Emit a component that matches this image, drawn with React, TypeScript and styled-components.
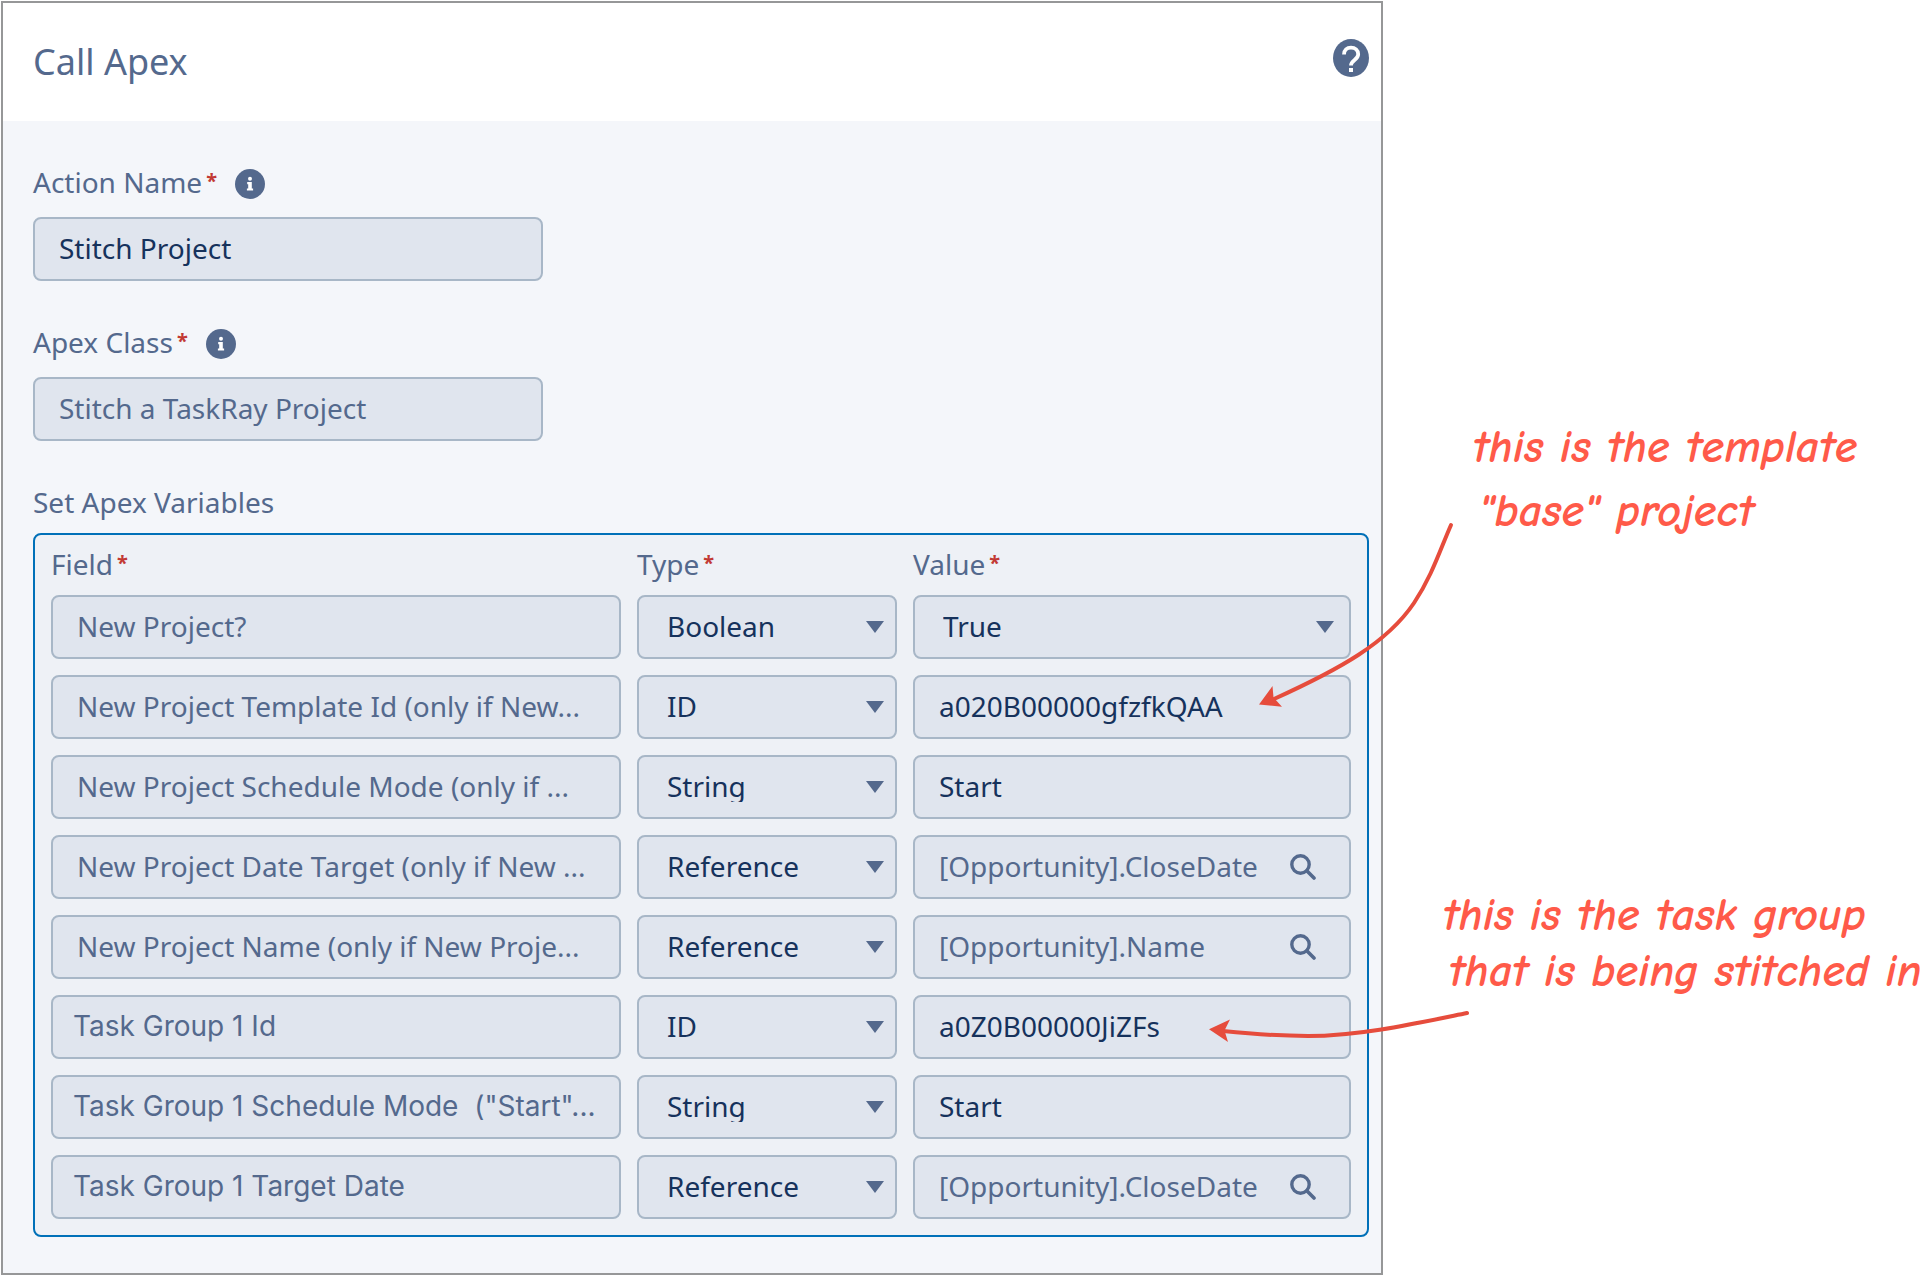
import React, { useId } from "react";
import styled, { createGlobalStyle } from "styled-components";

const color = {
  text: "#54698d",
  strong: "#16325c",
  border: "#a8b7c7",
  field: "#e0e5ee",
  body: "#f4f6fa",
  table: "#eef1f6",
  focus: "#0070b8",
  frame: "#969798",
  required: "#c23934",
  note: "#ff5a49",
  arrow: "#e64c3c",
};

const sans = `"Noto Sans", "Open Sans", sans-serif`;

const GlobalStyle = createGlobalStyle`
  *, *::before, *::after { box-sizing: border-box; }
  body {
    margin: 0;
    background: #fff;
    color: ${color.text};
    font: 28px/28px ${sans};
  }
  input, select, button { font: inherit; }
`;

const Page = styled.main`
  display: flex;
  align-items: flex-start;
  padding: 1px 0 0 1px;
  overflow: hidden;
`;

const Panel = styled.section`
  flex: 1;
  min-width: 0;
  border: 2px solid ${color.frame};
  background: ${color.body};
`;

const Header = styled.header`
  display: flex;
  justify-content: space-between;
  align-items: flex-start;
  height: 118px;
  padding: 36px 12px 0 30px;
  background: #fff;
`;

const Title = styled.h1`
  margin: 0;
  font-size: 36px;
  line-height: 46px;
  font-weight: 400;
`;

const IconButton = styled.button`
  display: flex;
  flex: none;
  padding: 0;
  border: 0;
  background: none;
  color: ${color.text};
  cursor: pointer;
`;

const Body = styled.div`
  padding: 48px 12px 36px 30px;
`;

const Field = styled.div`
  width: 510px;
  margin-bottom: 48px;
`;

const LabelRow = styled.div`
  display: flex;
  align-items: flex-start;
  gap: 18px;
  height: 32px;
  margin-bottom: 16px;
`;

const Label = styled.label`
  display: flex;
  gap: 4px;
  min-height: 28px;
  line-height: 26px;
`;

const Required = styled.abbr`
  color: ${color.required};
  font-size: 20px;
  font-weight: 700;
  line-height: 24px;
  text-decoration: none;
`;

const Box = styled.div`
  display: flex;
  align-items: center;
  height: 64px;
  border: 2px solid ${color.border};
  border-radius: 8px;
  background: ${color.field};
`;

const TextInput = styled.input<{ $muted?: boolean; $plain?: boolean }>`
  flex: 1;
  min-width: 0;
  height: 100%;
  padding: 0 24px 2px;
  border: 0;
  outline: 0;
  background: none;
  color: ${(p) => (p.$muted ? color.text : color.strong)};
  ${(p) => p.$plain && `font-family: Inter, sans-serif; padding: 0 20px 2px;`}
`;

const SearchButton = styled(IconButton)`
  margin-right: 33px;
`;

const SelectBox = styled.div<{ $inset: number }>`
  display: grid;
  align-items: center;

  & > * {
    grid-area: 1 / 1;
  }

  svg {
    justify-self: end;
    margin-right: ${(p) => p.$inset}px;
    pointer-events: none;
  }
`;

const Select = styled.select`
  appearance: none;
  width: 100%;
  height: 64px;
  padding: 11px 40px 13px 28px;
  border: 2px solid ${color.border};
  border-radius: 8px;
  background: ${color.field};
  color: ${color.strong};
  line-height: 32px;
`;

const GroupTitle = styled.h2`
  margin: 0 0 18px;
  font-size: 28px;
  line-height: 26px;
  font-weight: 400;
`;

const Variables = styled.div`
  display: grid;
  gap: 16px;
  padding: 16px;
  border: 2px solid ${color.focus};
  border-radius: 8px;
  background: ${color.table};
`;

const Row = styled.div`
  display: grid;
  grid-template-columns: minmax(0, 570fr) minmax(0, 260fr) minmax(0, 438fr);
  gap: 16px;
`;

const Notes = styled.aside`
  position: relative;
  display: flex;
  flex-direction: column;
  gap: 344px;
  flex: none;
  width: 544px;
  padding: 415px 0 0 60px;
  color: ${color.note};
`;

const Note = styled.p<{ $line: number; $indent: number }>`
  margin: 0 0 0 ${(p) => p.$indent}px;
  font: italic 700 46px/${(p) => p.$line}px "Comic Neue", fantasy;
  white-space: nowrap;
`;

const NoteLine = styled.span`
  display: block;

  & + & {
    padding-left: 6px;
  }
`;

const Arrows = styled.svg`
  position: absolute;
  top: -1px;
  left: -183px;
  pointer-events: none;
`;

const HelpIcon = () => (
  <svg width="36" height="38" viewBox="0 0 36 38" aria-hidden="true">
    <ellipse cx="18" cy="19" rx="18" ry="19" fill="currentColor" />
    <path d="M11 15.5C11 11 14 8.600 18 8.600s7.200 2.600 7.200 6.600c0 5.600-7.200 5.800-7.200 11.300" fill="none" stroke="#fff" strokeWidth="3.800" />
    <rect x="16" y="29" width="4" height="4" fill="#fff" />
  </svg>
);

const InfoIcon = () => (
  <svg width="30" height="30" viewBox="0 0 30 30" aria-hidden="true">
    <circle cx="15" cy="15" r="15" fill="currentColor" />
    <circle cx="15" cy="9.800" r="2" fill="#fff" />
    <path d="M12.200 13h4.600v6.400h1.300V21.600h-6.200v-2.200h1.300v-4.200h-1z" fill="#fff" />
  </svg>
);

const ArrowDown = () => (
  <svg width="18" height="12" viewBox="0 0 18 12" aria-hidden="true">
    <path d="M0 0h18L9 12z" fill={color.text} />
  </svg>
);

const SearchIcon = () => (
  <svg width="26" height="26" viewBox="0 0 26 26" aria-hidden="true">
    <circle cx="10.500" cy="10.500" r="8.700" fill="none" stroke="currentColor" strokeWidth="3.400" />
    <path d="M16.800 16.800l7.200 7.200" stroke="currentColor" strokeWidth="3.600" strokeLinecap="round" />
  </svg>
);

const Star = () => <Required title="required">*</Required>;

function ActionField({ label, value, muted }: { label: string; value: string; muted?: boolean }) {
  const id = useId();
  return (
    <Field>
      <LabelRow>
        <Label htmlFor={id}>
          {label}
          <Star />
        </Label>
        <IconButton type="button" aria-label={`About ${label}`}>
          <InfoIcon />
        </IconButton>
      </LabelRow>
      <Box>
        <TextInput id={id} defaultValue={value} $muted={muted} />
      </Box>
    </Field>
  );
}

function Picker({ label, value, inset }: { label: string; value: string; inset: number }) {
  return (
    <SelectBox $inset={inset}>
      <Select aria-label={label} defaultValue={value}>
        <option>{value}</option>
      </Select>
      <ArrowDown />
    </SelectBox>
  );
}

type Variable = { field: string; type: string; value: string; plain?: boolean };

const variables: Variable[] = [
  { field: "New Project?", type: "Boolean", value: "True" },
  { field: "New Project Template Id (only if New...", type: "ID", value: "a020B00000gfzfkQAA" },
  { field: "New Project Schedule Mode (only if ...", type: "String", value: "Start" },
  { field: "New Project Date Target (only if New ...", type: "Reference", value: "[Opportunity].CloseDate" },
  { field: "New Project Name (only if New Proje...", type: "Reference", value: "[Opportunity].Name" },
  { field: "Task Group 1 Id", type: "ID", value: "a0Z0B00000JiZFs", plain: true },
  { field: 'Task Group 1 Schedule Mode  ("Start"...', type: "String", value: "Start", plain: true },
  { field: "Task Group 1 Target Date", type: "Reference", value: "[Opportunity].CloseDate", plain: true },
];

function ValueCell({ type, value }: Variable) {
  if (type === "Boolean") return <Picker label="Value" value={value} inset={17} />;
  const reference = type === "Reference";
  return (
    <Box>
      <TextInput aria-label="Value" defaultValue={value} $muted={reference} />
      {reference && (
        <SearchButton type="button" aria-label="Search">
          <SearchIcon />
        </SearchButton>
      )}
    </Box>
  );
}

export default function App() {
  return (
    <>
      <GlobalStyle />
      <Page>
        <Panel>
          <Header>
            <Title>Call Apex</Title>
            <IconButton type="button" aria-label="Help">
              <HelpIcon />
            </IconButton>
          </Header>
          <Body>
            <ActionField label="Action Name" value="Stitch Project" />
            <ActionField label="Apex Class" value="Stitch a TaskRay Project" muted />
            <GroupTitle>Set Apex Variables</GroupTitle>
            <Variables>
              <Row>
                {["Field", "Type", "Value"].map((head) => (
                  <Label as="span" key={head}>
                    {head}
                    <Star />
                  </Label>
                ))}
              </Row>
              {variables.map((v) => (
                <Row key={v.field}>
                  <Box>
                    <TextInput aria-label="Field" defaultValue={v.field} $muted $plain={v.plain} />
                  </Box>
                  <Picker label="Type" value={v.type} inset={13} />
                  <ValueCell {...v} />
                </Row>
              ))}
            </Variables>
          </Body>
        </Panel>
        <Notes>
          <Note $line={64} $indent={30}>
            <NoteLine>this is the template</NoteLine>
            <NoteLine>"base" project</NoteLine>
          </Note>
          <Note $line={56} $indent={0}>
            <NoteLine>this is the task group</NoteLine>
            <NoteLine>that is being stitched in</NoteLine>
          </Note>
          <Arrows width="300" height="1100" viewBox="1200 0 300 1100" fill="none" stroke={color.arrow} strokeWidth="4" strokeLinecap="round" aria-hidden="true">
            <path d="M1451 525C1440 550 1432 576 1414 603C1387 643 1340 669 1274 699" />
            <path d="M1467 1013C1418 1023 1360 1036 1308 1036C1280 1036 1252 1034 1223 1031" />
            <path d="M1259 704.500L1272.500 686L1273.500 697.500L1282 706.700z" fill={color.arrow} stroke="none" />
            <path d="M1209 1029.300L1230 1019.500L1224.500 1030.500L1228 1042z" fill={color.arrow} stroke="none" />
          </Arrows>
        </Notes>
      </Page>
    </>
  );
}
